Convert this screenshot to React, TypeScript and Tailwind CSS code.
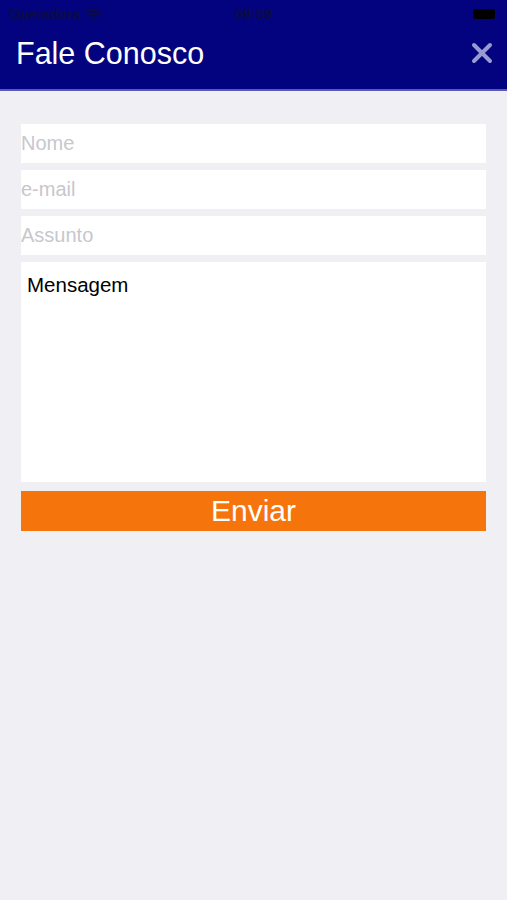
import React from 'react';

const font = { fontFamily: '"Liberation Sans", Arial, sans-serif' };

const App: React.FC = () => {
  return (
    <div className="min-h-[900px] bg-[#efeff4]" style={font}>
      <header className="bg-[#03037f] border-b-2 border-[#5a5ab0]">
        <div className="h-[28px] flex items-center justify-between px-[9px] text-[#0b0b45]">
          <div className="flex items-center gap-[5px] w-[140px]">
            <span className="text-[14px] font-bold">Operadora</span>
            <svg width="17" height="13" viewBox="0 0 17 13" fill="none">
              <path d="M1 4.5a11 11 0 0 1 15 0" stroke="#0b0b45" strokeWidth="2.2" strokeLinecap="round" />
              <path d="M3.8 7.5a7 7 0 0 1 9.4 0" stroke="#0b0b45" strokeWidth="2.2" strokeLinecap="round" />
              <circle cx="8.5" cy="11" r="1.8" fill="#0b0b45" />
            </svg>
          </div>
          <span className="text-[15px] font-bold">09:59</span>
          <div className="w-[140px] flex justify-end pr-[3px]">
            <div className="w-[22px] h-[10px] rounded-[2px] bg-black" />
          </div>
        </div>
        <div className="h-[61px] flex items-center justify-between pl-[16px] pr-[14px] pb-[11px]">
          <h1 className="text-white text-[30.5px] leading-none">Fale Conosco</h1>
          <svg width="22" height="22" viewBox="0 0 22 22">
            <path d="M3 3l16 16M19 3L3 19" stroke="#9a9ad2" strokeWidth="4" strokeLinecap="round" />
          </svg>
        </div>
      </header>

      <main className="px-[21px] pt-[33px] flex flex-col">
        <div className="flex flex-col gap-[7px]">
          {['Nome', 'e-mail', 'Assunto'].map(p => (
            <input
              key={p}
              placeholder={p}
              className="h-[39px] bg-white text-[20px] text-black placeholder:text-[#c7c7cd] outline-none"
              style={font}
            />
          ))}
          <textarea
            defaultValue="Mensagem"
            className="h-[220px] bg-white text-[20.5px] text-black px-[6px] pt-[8px] resize-none outline-none"
            style={font}
          />
        </div>
        <button className="mt-[9px] h-[40px] bg-[#f5750c] text-white text-[30px] leading-none" style={font}>
          Enviar
        </button>
      </main>
    </div>
  );
};

export default App;
